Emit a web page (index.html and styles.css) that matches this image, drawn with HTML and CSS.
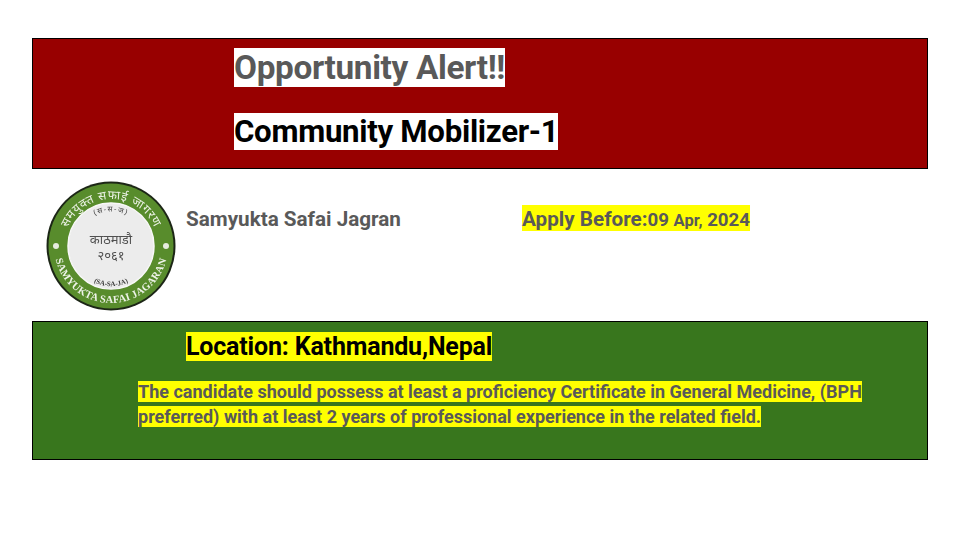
FILE: index.html
```html
<!DOCTYPE html>
<html lang="en">
<head>
<meta charset="utf-8">
<title>Opportunity Alert</title>
<link rel="stylesheet" href="styles.css">
</head>
<body>
<main class="slide">
  <section class="banner">
    <h1 class="alert"><span class="mark-white">Opportunity Alert!!</span></h1>
    <h2 class="role"><span class="mark-white">Community Mobilizer-1</span></h2>
  </section>
  <section class="org">
    <svg class="logo" viewBox="0 0 130 130" role="img" aria-label="Samyukta Safai Jagran logo">
      <defs>
        <path id="arc-top" d="M18 65 A47 47 0 0 1 112 65"/>
        <path id="arc-bottom" d="M8 65 A57 57 0 0 0 122 65"/>
        <path id="arc-in-top" d="M33 50 A36 36 0 0 1 97 50"/>
        <path id="arc-in-bottom" d="M26 72 A39.500 39.500 0 0 0 104 72"/>
      </defs>
      <circle class="logo-edge" cx="65" cy="65" r="64.500"/>
      <circle class="logo-ring" cx="65" cy="65" r="62.500"/>
      <circle class="logo-face" cx="65" cy="65" r="43"/>
      <text class="ring-deva"><textPath href="#arc-top" startOffset="50%" text-anchor="middle">समयुक्त  सफाई  जागरण</textPath></text>
      <text class="ring-latin"><textPath href="#arc-bottom" startOffset="50%" text-anchor="middle">SAMYUKTA SAFAI JAGARAN</textPath></text>
      <text class="face-small face-small-top"><textPath href="#arc-in-top" startOffset="50%" text-anchor="middle">(स-स-ज)</textPath></text>
      <text class="face-small"><textPath href="#arc-in-bottom" startOffset="50%" text-anchor="middle">(SA-SA-JA)</textPath></text>
      <text class="face-mid" x="65" y="63" text-anchor="middle">काठमाडौ</text>
      <text class="face-mid" x="65" y="79" text-anchor="middle">२०६१</text>
      <circle class="rosette" cx="10" cy="65" r="3"/>
      <circle class="rosette" cx="120" cy="65" r="3"/>
    </svg>
    <p class="org-name">Samyukta Safai Jagran</p>
    <p class="deadline"><span class="mark-yellow deadline-mark">Apply Before:<span class="date">09 <small>Apr,</small> 2024</span></span></p>
  </section>
  <section class="details">
    <h3 class="location"><span class="mark-yellow">Location: Kathmandu,Nepal</span></h3>
    <p class="requirement"><span class="mark-yellow">The candidate should possess at least a proficiency Certificate in General Medicine, (BPH preferred) with at least 2 years of professional experience in the related field.</span></p>
  </section>
</main>
</body>
</html>
```
FILE: styles.css
```css
* { box-sizing: border-box; margin: 0; padding: 0; }
html, body { width: 960px; height: 540px; background: #fff; overflow: hidden; }
body { font-family: Roboto, "Noto Sans", sans-serif; font-weight: 700; color: #595959; }

.slide { display: flex; flex-direction: column; padding: 38px 32px 0; }

.mark-white { background: #fff; }
.mark-yellow { background: #ff0; }

.banner {
  height: 131px;
  background: #980000;
  border: 1px solid #000;
  padding: 9px 0 0 201px;
}
.alert { font-size: 33.330px; letter-spacing: -0.350px; line-height: 40px; font-weight: 700; color: #595959; }
.role { font-size: 31.200px; letter-spacing: -0.290px; line-height: 36px; font-weight: 700; color: #000; margin-top: 26px; }

.org { display: flex; height: 152px; }
.logo { width: 130px; height: 130px; margin: 12px 0 0 13.500px; flex: none; filter: blur(0.5px); }
.org-name { font-size: 20.670px; line-height: 24px; margin: 38px 0 0 10.500px; width: 336px; }
.deadline { font-size: 20.670px; line-height: 24px; margin-top: 38px; }
.deadline-mark { padding-top: 2px; }
.date { font-size: 18.670px; }
.date small { font-size: 16.500px; }

.logo-edge { fill: #1c2616; }
.logo-ring { fill: #588c2c; }
.logo-face { fill: #ececec; stroke: #f8f8f8; stroke-width: 1.500px; }
.rosette { fill: #e6ecdf; }
.ring-deva { font-family: "Noto Sans", "DejaVu Sans", sans-serif; font-size: 12px; font-weight: 400; letter-spacing: 0.700px; fill: #eef3e8; }
.ring-latin { font-family: "Liberation Serif", serif; font-size: 10.500px; font-weight: 700; letter-spacing: 0.200px; fill: #eef3e8; }
.face-small { font-family: "Liberation Serif", serif; font-size: 7px; font-weight: 700; fill: #3a3a3a; }
.face-small-top { font-family: "Noto Sans", "DejaVu Sans", sans-serif; font-size: 7.500px; letter-spacing: 1.200px; font-weight: 400; }
.face-mid { font-family: "Noto Sans", "DejaVu Sans", sans-serif; font-size: 13px; font-weight: 400; fill: #505050; }

.details {
  height: 139px;
  background: #38761d;
  border: 1px solid #000;
  padding: 10px 0 0 105px;
}
.location { font-size: 25px; letter-spacing: -0.180px; line-height: 30px; font-weight: 700; color: #000; padding-left: 48px; }
.requirement { font-size: 18px; line-height: 25px; width: 740px; margin-top: 17px; color: #595959; }
```
